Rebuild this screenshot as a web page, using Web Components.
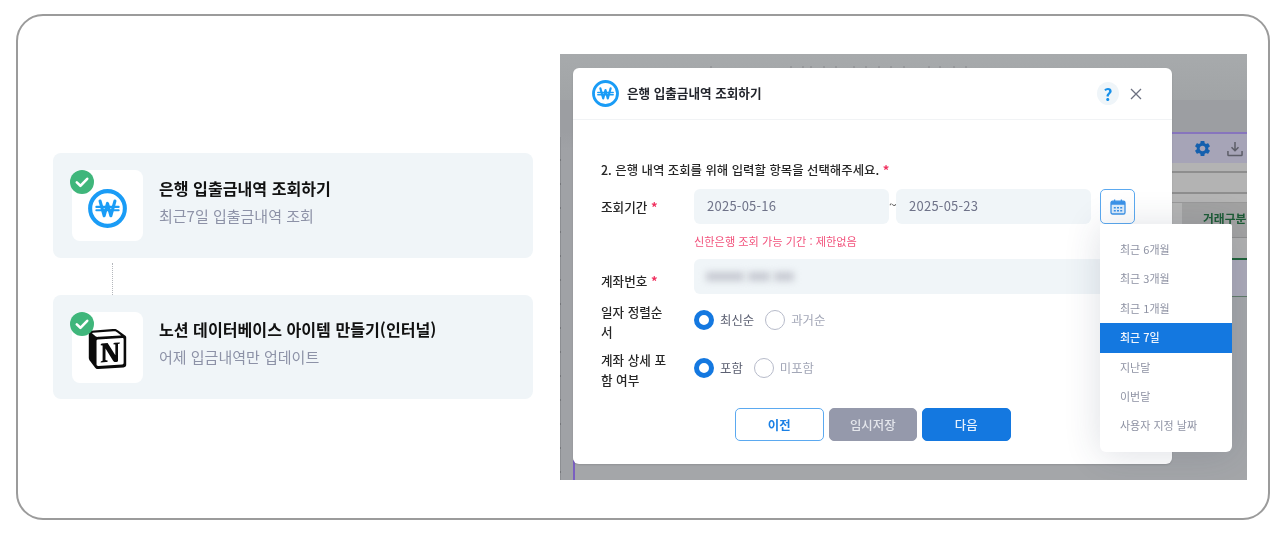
<!DOCTYPE html>
<html lang="ko">
<head>
<meta charset="utf-8">
<title>은행 입출금내역 조회하기</title>
<style>
    html, body { margin: 0; background: #fff; }
    body { font-family: "Noto Sans CJK KR", "Noto Sans", sans-serif; color: #222; }
</style>
</head>
<body>
<app-frame>
    <flow-card slot="left" heading="은행 입출금내역 조회하기" sub="최근7일 입출금내역 조회">
        <won-logo size="39"></won-logo>
    </flow-card>
    <flow-link slot="left"></flow-link>
    <flow-card slot="left" style="height: 104px" heading="노션 데이터베이스 아이템 만들기(인터널)" sub="어제 입금내역만 업데이트">
        <notion-logo></notion-logo>
    </flow-card>

    <shot-backdrop slot="right">
        <bank-modal>
            <form-row label="조회기간" required>
                <date-range from="2025-05-16" to="2025-05-23"></date-range>
            </form-row>
            <p-hint>신한은행 조회 가능 기간 : 제한없음</p-hint>
            <form-row label="계좌번호" required>
                <account-field></account-field>
            </form-row>
            <form-row label="일자 정렬순서" tall>
                <radio-option checked>최신순</radio-option>
                <radio-option>과거순</radio-option>
            </form-row>
            <form-row label="계좌 상세 포함 여부" tall>
                <radio-option checked>포함</radio-option>
                <radio-option>미포함</radio-option>
            </form-row>
            <modal-actions>
                <action-button kind="outline">이전</action-button>
                <action-button kind="muted">임시저장</action-button>
                <action-button kind="primary">다음</action-button>
            </modal-actions>
        </bank-modal>
        <period-menu selected="최근 7일" items="최근 6개월|최근 3개월|최근 1개월|최근 7일|지난달|이번달|사용자 지정 날짜"></period-menu>
    </shot-backdrop>
</app-frame>

<script>
const FONT = '"Noto Sans CJK KR", "Noto Sans", sans-serif';

// small helper so every element gets its open shadow root the same way
function shadowOf(el, html) {
    const shadow = el.attachShadow({ mode: 'open' });
    const template = document.createElement('template');
    template.innerHTML = html;
    shadow.appendChild(template.content.cloneNode(true));
    return shadow;
}

class AppFrame extends HTMLElement {
    constructor() {
        super();
        shadowOf(this, `
            <style>
                :host {
                    display: flex;
                    box-sizing: border-box;
                    width: 1254px;
                    height: 506px;
                    margin: 14px 0 0 16px;
                    padding: 38px 0 0 35px;
                    gap: 27px;
                    border: 2px solid #9b9b9b;
                    border-radius: 27px;
                    font-family: ${FONT};
                }
                .left { display: flex; flex-direction: column; width: 480px; padding-top: 99px; }
            </style>
            <div class="left"><slot name="left"></slot></div>
            <slot name="right"></slot>
        `);
    }
}

class FlowCard extends HTMLElement {
    constructor() {
        super();
        shadowOf(this, `
            <style>
                :host {
                    display: flex;
                    align-items: center;
                    box-sizing: border-box;
                    height: 105px;
                    padding: 0 19px;
                    gap: 16px;
                    background: #f0f5f8;
                    border-radius: 8px;
                    filter: blur(0.3px);
                }
                .tile {
                    position: relative;
                    display: flex;
                    align-items: center;
                    justify-content: center;
                    align-self: flex-start;
                    width: 71px;
                    height: 71px;
                    margin-top: 17px;
                    padding-top: 6px;
                    box-sizing: border-box;
                    background: #fff;
                    border-radius: 8px;
                }
                .badge {
                    position: absolute;
                    left: -2px;
                    top: 0;
                    width: 24px;
                    height: 24px;
                    border-radius: 50%;
                    background: #3fb67b;
                }
                .badge svg { display: block; }
                .text { padding-bottom: 8px; }
                h3 {
                    margin: 0 0 6px;
                    font-size: 16.1px;
                    line-height: 22px;
                    font-weight: 700;
                    color: #111;
                }
                p {
                    margin: 0;
                    font-size: 15px;
                    line-height: 22px;
                    color: #8d92a7;
                }
            </style>
            <div class="tile">
                <slot></slot>
                <span class="badge">
                    <svg width="24" height="24" viewBox="0 0 24 24" fill="none">
                        <path d="M6.8 12.4l3.6 3.4 6.8-7" stroke="#fff" stroke-width="2.6" stroke-linecap="round" stroke-linejoin="round"/>
                    </svg>
                </span>
            </div>
            <div class="text">
                <h3>${this.getAttribute('heading')}</h3>
                <p>${this.getAttribute('sub')}</p>
            </div>
        `);
    }
}

class FlowLink extends HTMLElement {
    constructor() {
        super();
        shadowOf(this, `
            <style>
                :host { display: block; height: 37px; box-sizing: border-box; padding: 5px 0 0 59px; }
                div { height: 100%; border-left: 1px dotted #b4b7bc; }
            </style>
            <div></div>
        `);
    }
}

class WonLogo extends HTMLElement {
    constructor() {
        super();
        const size = this.getAttribute('size') || 27;
        shadowOf(this, `
            <style>:host { display: block; width: ${size}px; height: ${size}px; } svg { display: block; }</style>
            <svg width="${size}" height="${size}" viewBox="0 0 40 40" fill="none">
                <circle cx="20" cy="20" r="17.8" stroke="#1a9cf6" stroke-width="4.2"/>
                <path d="M12.4 12.4l4.2 15 3.4-12.6 3.4 12.6 4.2-15" stroke="#1a9cf6" stroke-width="3.2" stroke-linejoin="round" stroke-linecap="round"/>
                <path d="M8.6 18.4h22.8M8.6 21.8h22.8" stroke="#1a9cf6" stroke-width="2.2" stroke-linecap="round"/>
            </svg>
        `);
    }
}

class NotionLogo extends HTMLElement {
    constructor() {
        super();
        shadowOf(this, `
            <style>:host { display: block; width: 39px; height: 40px; margin: -4px 1px 0 0; } svg { display: block; }</style>
            <svg width="39" height="40" viewBox="0 0 24 24" preserveAspectRatio="none" fill="#0a0a0a">
                <path d="M4.459 4.208c.746.606 1.026.56 2.428.466l13.215-.793c.28 0 .047-.28-.046-.326L17.86 1.968c-.42-.326-.981-.7-2.055-.607L3.01 2.295c-.466.046-.56.28-.374.466zm.793 3.08v13.904c0 .747.373 1.027 1.214.98l14.523-.84c.841-.046.935-.56.935-1.167V6.354c0-.606-.233-.933-.748-.887l-15.177.887c-.56.047-.747.327-.747.933zm14.337.745c.093.42 0 .84-.42.888l-.7.14v10.264c-.608.327-1.168.514-1.635.514-.748 0-.935-.234-1.495-.933l-4.577-7.186v6.952L12.21 19s0 .84-1.168.84l-3.222.186c-.093-.186 0-.653.327-.746l.84-.233V9.854L7.822 9.76c-.094-.42.14-1.026.793-1.073l3.456-.233 4.764 7.279v-6.44l-1.215-.14c-.093-.514.28-.887.747-.933zM1.936 1.035l13.31-.98c1.634-.14 2.055-.047 3.082.7l4.249 2.986c.7.513.934.653.934 1.213v16.378c0 1.026-.373 1.634-1.68 1.726l-15.458.934c-.98.047-1.448-.093-1.962-.747l-3.129-4.06c-.56-.747-.793-1.306-.793-1.96V2.667c0-.839.374-1.54 1.447-1.632z"/>
            </svg>
        `);
    }
}

// the dimmed app behind the modal: a stack of strips, modal and menu lie over it
class ShotBackdrop extends HTMLElement {
    constructor() {
        super();
        shadowOf(this, `
            <style>
                :host {
                    display: block;
                    position: relative;
                    width: 687px;
                    height: 426px;
                    overflow: hidden;
                    background: #a4a6a9;
                    filter: blur(0.35px);
                }
                .strips { display: flex; flex-direction: column; height: 100%; }
                .top { flex: none; height: 46px; background: linear-gradient(#a7aaac, #a1a4a6); }
                .dim { flex: none; height: 32px; background: #9c9ea2; border-bottom: 2px solid #8775bd; }
                .tools {
                    display: flex;
                    flex: none;
                    align-items: center;
                    justify-content: flex-end;
                    gap: 15px;
                    height: 29px;
                    padding-right: 4px;
                    background: #a6a4b7;
                }
                .tools svg { display: block; }
                .line { flex: none; background: #b3b3b3; border-bottom: 2px solid #8e8e8e; }
                .line.a { height: 8px; }
                .line.b { height: 19px; }
                .line.c { height: 8px; border: 0; background: #b5b5b5; }
                .head {
                    display: flex;
                    flex: none;
                    height: 34px;
                    background: #a2a2a2;
                    border-top: 1px solid #999;
                }
                .head .stub { flex: none; width: 622px; background: #b4b4b4; }
                .head b {
                    flex: none;
                    padding: 6px 0 0 21px;
                    font-size: 11.8px;
                    line-height: 18px;
                    font-weight: 700;
                    color: #1c5b35;
                    white-space: nowrap;
                }
                .band { flex: none; height: 20px; background: #b0b0b0; border-top: 1px solid #8e8e8e; border-bottom: 2px solid #1e6239; }
                .row { flex: none; height: 36px; background: #aba9b8; border-bottom: 1px solid #5f7a68; }
                .rest { flex: 1; background: #a4a6a9; }
                .ticks { position: absolute; left: 0; top: 12px; }
                .gutter {
                    position: absolute;
                    left: 0;
                    top: 46px;
                    bottom: 0;
                    width: 13px;
                    background: linear-gradient(#9c9ea2 0 32px, #a0a2a6 50px);
                }
                .edge {
                    position: absolute;
                    left: 0;
                    top: 83px;
                    bottom: 0;
                    width: 1px;
                    background: repeating-linear-gradient(#8d8f93 0 22px, #74767a 22px 24px);
                }
                .purple { position: absolute; left: 13px; top: 406px; bottom: 0; width: 1.5px; background: #7a5fc0; }
            </style>
            <div class="strips">
                <div class="top"></div>
                <div class="dim"></div>
                <div class="tools">
                    <svg width="19" height="19" viewBox="0 0 24 24" fill="#1560ae"><path d="M19.14 12.94c.04-.3.06-.61.06-.94 0-.32-.02-.64-.07-.94l2.03-1.58c.18-.14.23-.41.12-.61l-1.92-3.32c-.12-.22-.37-.29-.59-.22l-2.39.96c-.5-.38-1.03-.7-1.62-.94l-.36-2.54c-.04-.24-.24-.41-.48-.41h-3.84c-.24 0-.43.17-.47.41l-.36 2.54c-.59.24-1.13.57-1.62.94l-2.39-.96c-.22-.08-.47 0-.59.22L2.74 8.87c-.12.21-.08.47.12.61l2.03 1.58c-.05.3-.09.63-.09.94s.02.64.07.94l-2.03 1.58c-.18.14-.23.41-.12.61l1.92 3.32c.12.22.37.29.59.22l2.39-.96c.5.38 1.03.7 1.62.94l.36 2.54c.05.24.24.41.48.41h3.84c.24 0 .44-.17.47-.41l.36-2.54c.59-.24 1.13-.56 1.62-.94l2.39.96c.22.08.47 0 .59-.22l1.92-3.32c.12-.22.07-.47-.12-.61l-2.01-1.58zM12 15.6c-1.98 0-3.6-1.62-3.6-3.6s1.62-3.6 3.6-3.6 3.6 1.62 3.6 3.6-1.62 3.6-3.6 3.6z"/></svg>
                    <svg width="16" height="16" viewBox="0 0 17 17" fill="none" stroke="#5d5e68" stroke-width="1.6"><path d="M8.5 1v9M4.8 6.6l3.7 3.7 3.7-3.7M1 10.5v4.2c0 .5.3.8.8.8h13.4c.5 0 .8-.3.8-.8v-4.2"/></svg>
                </div>
                <div class="line a"></div>
                <div class="line b"></div>
                <div class="line c"></div>
                <div class="head"><span class="stub"></span><b>거래구분</b></div>
                <div class="band"></div>
                <div class="row"></div>
                <div class="rest"></div>
            </div>
            <svg class="ticks" width="687" height="3" fill="#97999c">
                <rect x="150" width="2" height="2"/><rect x="230" width="2" height="2"/><rect x="242" width="2" height="2"/>
                <rect x="250" width="2" height="2"/><rect x="263" width="2" height="2"/><rect x="275" width="2" height="2"/>
                <rect x="293" width="2" height="2"/><rect x="305" width="2" height="2"/><rect x="318" width="2" height="2"/>
                <rect x="330" width="2" height="2"/><rect x="343" width="2" height="2"/><rect x="368" width="2" height="2"/>
                <rect x="379" width="2" height="2"/><rect x="393" width="2" height="2"/><rect x="405" width="2" height="2"/>
            </svg>
            <div class="gutter"></div>
            <div class="edge"></div>
            <div class="purple"></div>
            <slot></slot>
        `);
    }
}

class BankModal extends HTMLElement {
    constructor() {
        super();
        shadowOf(this, `
            <style>
                :host {
                    display: block;
                    position: absolute;
                    left: 13px;
                    top: 14px;
                    width: 599px;
                    background: #fff;
                    border-radius: 6px;
                    box-shadow: 0 1px 2px rgba(0, 0, 0, 0.12);
                    font-size: 12.6px;
                    color: #262626;
                }
                header {
                    display: flex;
                    align-items: center;
                    box-sizing: border-box;
                    height: 52px;
                    padding: 0 30px 0 19px;
                    gap: 8px;
                    border-bottom: 1px solid #f1f3f5;
                }
                h2 { flex: 1; margin: 0 0 2px; font-size: 12.6px; font-weight: 700; color: #23262d; }
                .help {
                    display: flex;
                    align-items: center;
                    justify-content: center;
                    width: 22px;
                    height: 23px;
                    margin-right: 3px;
                    border-radius: 50%;
                    background: #eff5f9;
                    color: #1790ea;
                    font-size: 17.5px;
                    font-weight: 700;
                }
                .close { display: block; }
                main { padding: 40px 37px 23px 28px; }
                .step { margin-bottom: 9px; font-size: 12.4px; line-height: 20px; font-weight: 500; }
                .star { color: #f0305f; font-weight: 700; font-size: 13px; }
            </style>
            <header>
                <won-logo size="27"></won-logo>
                <h2>은행 입출금내역 조회하기</h2>
                <span class="help">?</span>
                <svg class="close" width="12" height="12" viewBox="0 0 12 12" stroke="#6c7080" stroke-width="1.3"><path d="M1 1l10 10M11 1L1 11"/></svg>
            </header>
            <main>
                <div class="step">2. 은행 내역 조회를 위해 입력할 항목을 선택해주세요. <span class="star">*</span></div>
                <slot></slot>
            </main>
        `);
    }
}

class FormRow extends HTMLElement {
    constructor() {
        super();
        const star = this.hasAttribute('required') ? ' <span class="star">*</span>' : '';
        const tall = this.hasAttribute('tall');
        shadowOf(this, `
            <style>
                :host {
                    display: grid;
                    grid-template-columns: 93px 1fr;
                    align-items: center;
                    margin-bottom: ${tall ? 8 : 0}px;
                }
                .label { width: 72px; line-height: 20px; font-weight: 500; }
                .star { color: #f0305f; font-weight: 700; font-size: 13px; }
                .value { display: flex; align-items: center; gap: 11px; ${tall ? 'padding-bottom: 4px;' : ''} }
            </style>
            <div class="label">${this.getAttribute('label')}${star}</div>
            <div class="value"><slot></slot></div>
        `);
    }
}

class DateRange extends HTMLElement {
    constructor() {
        super();
        shadowOf(this, `
            <style>
                :host { display: flex; align-items: center; flex: 1; }
                .field {
                    box-sizing: border-box;
                    width: 195px;
                    height: 35px;
                    padding: 0 13px;
                    background: #f0f5f8;
                    border-radius: 6px;
                    font-size: 13px;
                    letter-spacing: 0.25px;
                    line-height: 34px;
                    color: #6f7389;
                }
                .tilde { width: 7px; height: 35px; text-align: center; font-size: 14px; line-height: 30px; color: #555; }
                .cal {
                    display: flex;
                    align-items: center;
                    justify-content: center;
                    box-sizing: border-box;
                    width: 35px;
                    height: 35px;
                    margin-left: 9px;
                    border: 1.5px solid #5ba9f0;
                    border-radius: 5px;
                    background: #fff;
                }
            </style>
            <div class="field">${this.getAttribute('from')}</div>
            <span class="tilde">~</span>
            <div class="field">${this.getAttribute('to')}</div>
            <div class="cal">
                <svg width="16" height="16" viewBox="0 0 16 16" fill="none">
                    <rect x="1" y="2.2" width="14" height="12.8" rx="1.6" fill="#dcecfb" stroke="#3a92e8" stroke-width="1.3"/>
                    <path d="M1 3.6c0-.8.6-1.4 1.4-1.4h11.2c.8 0 1.4.6 1.4 1.4v2.2H1z" fill="#3a92e8"/>
                    <path d="M4.6 .6v3M11.4 .6v3" stroke="#3a92e8" stroke-width="1.3"/>
                    <path d="M3.8 8h2v1.6h-2zM7 8h2v1.6H7zM10.2 8h2v1.6h-2zM3.8 11h2v1.6h-2zM7 11h2v1.6H7zM10.2 11h2v1.6h-2z" fill="#3a92e8"/>
                </svg>
            </div>
        `);
    }
}

class PHint extends HTMLElement {
    constructor() {
        super();
        shadowOf(this, `
            <style>
                :host {
                    display: block;
                    margin: 8px 0 9px 93px;
                    font-size: 11.2px;
                    line-height: 18px;
                    color: #f2527c;
                }
            </style>
            <slot></slot>
        `);
    }
}

// the number is masked in the reference, so only the smear is drawn
class AccountField extends HTMLElement {
    constructor() {
        super();
        shadowOf(this, `
            <style>
                :host {
                    display: flex;
                    align-items: center;
                    flex: 1;
                    box-sizing: border-box;
                    height: 35px;
                    margin-bottom: 8px;
                    padding: 0 12px;
                    gap: 4px;
                    background: #f0f5f8;
                    border-radius: 6px;
                }
                i { display: block; height: 9px; background: #c6c9d1; filter: blur(3.5px); }
            </style>
            <i style="width: 38px"></i><i style="width: 22px"></i><i style="width: 20px"></i>
        `);
    }
}

class RadioOption extends HTMLElement {
    constructor() {
        super();
        const on = this.hasAttribute('checked');
        shadowOf(this, `
            <style>
                :host {
                    display: inline-flex;
                    align-items: center;
                    gap: 6px;
                    color: ${on ? '#5c6072' : '#a3a7b7'};
                    font-size: 12.4px;
                    line-height: 20px;
                }
                .dot {
                    box-sizing: border-box;
                    width: 20px;
                    height: 20px;
                    border-radius: 50%;
                    background: #fff;
                    border: ${on ? '5.5px solid #1478e0' : '1.2px solid #b7bbca'};
                }
            </style>
            <span class="dot"></span>
            <slot></slot>
        `);
    }
}

class ModalActions extends HTMLElement {
    constructor() {
        super();
        shadowOf(this, `
            <style>
                :host { display: flex; padding: 10px 0 0 134px; gap: 5px; }
            </style>
            <slot></slot>
        `);
    }
}

class ActionButton extends HTMLElement {
    constructor() {
        super();
        const looks = {
            outline: 'background: #fff; border: 1.5px solid #5ba9f0; color: #1a80e5; font-weight: 700;',
            muted: 'background: #9599ab; border: 1.5px solid #9599ab; color: #e4e6ec; font-weight: 500;',
            primary: 'background: #1478e0; border: 1.5px solid #1478e0; color: #e6f1fd; font-weight: 500;'
        };
        shadowOf(this, `
            <style>
                :host {
                    display: flex;
                    align-items: center;
                    justify-content: center;
                    box-sizing: border-box;
                    width: 88.5px;
                    height: 33px;
                    border-radius: 5px;
                    font-size: 12.4px;
                    ${looks[this.getAttribute('kind')]}
                }
            </style>
            <slot></slot>
        `);
    }
}

class PeriodMenu extends HTMLElement {
    constructor() {
        super();
        const selected = this.getAttribute('selected');
        const rows = this.getAttribute('items').split('|').map(item =>
            `<li class="${item === selected ? 'on' : ''}">${item}</li>`).join('');
        shadowOf(this, `
            <style>
                :host {
                    display: block;
                    position: absolute;
                    left: 540px;
                    top: 170px;
                    width: 132px;
                    box-sizing: border-box;
                    padding: 11px 0 11px;
                    background: #fff;
                    border-radius: 2px 2px 6px 6px;
                    box-shadow: 0 2px 36px rgba(45, 55, 85, 0.16);
                }
                ul { margin: 0; padding: 0; list-style: none; }
                li {
                    height: 29.4px;
                    padding-left: 20px;
                    font-size: 11px;
                    line-height: 29.4px;
                    color: #8e92a3;
                }
                li.on { background: #1478e0; color: #f1f6fd; font-weight: 500; }
            </style>
            <ul>${rows}</ul>
        `);
    }
}

customElements.define('won-logo', WonLogo);
customElements.define('notion-logo', NotionLogo);
customElements.define('flow-card', FlowCard);
customElements.define('flow-link', FlowLink);
customElements.define('form-row', FormRow);
customElements.define('date-range', DateRange);
customElements.define('p-hint', PHint);
customElements.define('account-field', AccountField);
customElements.define('radio-option', RadioOption);
customElements.define('action-button', ActionButton);
customElements.define('modal-actions', ModalActions);
customElements.define('period-menu', PeriodMenu);
customElements.define('bank-modal', BankModal);
customElements.define('shot-backdrop', ShotBackdrop);
customElements.define('app-frame', AppFrame);
</script>
</body>
</html>
